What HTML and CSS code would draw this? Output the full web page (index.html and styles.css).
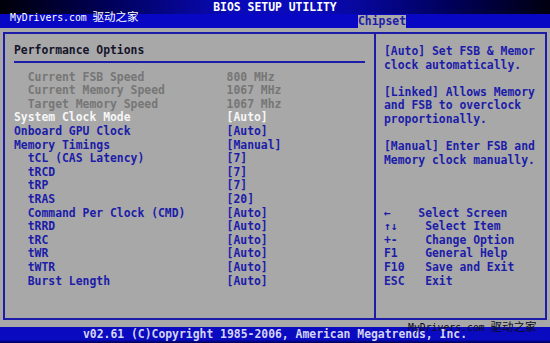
FILE: index.html
```html
<!DOCTYPE html>
<html lang="en">
<head>
  <meta charset="UTF-8">
  <meta name="viewport" content="width=device-width, initial-scale=1.0">
  <title>BIOS Setup Utility</title>
  <link rel="stylesheet" href="styles.css">
</head>
<body>
  <div class="screen">
    <header class="titlebar">BIOS SETUP UTILITY</header>
    <nav class="tabs">
      <span class="tab">Chipset</span>
    </nav>

    <main class="panels">
      <section class="options">
        <h1 class="heading">Performance Options</h1>
        <ul class="rows">
          <li class="row disabled"><span class="label sub">Current FSB Speed</span><span>800 MHz</span></li>
          <li class="row disabled"><span class="label sub">Current Memory Speed</span><span>1067 MHz</span></li>
          <li class="row disabled"><span class="label sub">Target Memory Speed</span><span>1067 Mhz</span></li>
          <li class="row selected"><span class="label">System Clock Mode</span><span>[Auto]</span></li>
          <li class="row"><span class="label">Onboard GPU Clock</span><span>[Auto]</span></li>
          <li class="row"><span class="label">Memory Timings</span><span>[Manual]</span></li>
          <li class="row"><span class="label sub">tCL (CAS Latency)</span><span>[7]</span></li>
          <li class="row"><span class="label sub">tRCD</span><span>[7]</span></li>
          <li class="row"><span class="label sub">tRP</span><span>[7]</span></li>
          <li class="row"><span class="label sub">tRAS</span><span>[20]</span></li>
          <li class="row"><span class="label sub">Command Per Clock (CMD)</span><span>[Auto]</span></li>
          <li class="row"><span class="label sub">tRRD</span><span>[Auto]</span></li>
          <li class="row"><span class="label sub">tRC</span><span>[Auto]</span></li>
          <li class="row"><span class="label sub">tWR</span><span>[Auto]</span></li>
          <li class="row"><span class="label sub">tWTR</span><span>[Auto]</span></li>
          <li class="row"><span class="label sub">Burst Length</span><span>[Auto]</span></li>
        </ul>
      </section>

      <aside class="help">
        <p>[Auto] Set FSB &amp; Memor<br>clock automatically.</p>
        <p>[Linked] Allows Memory<br>and FSB to overclock<br>proportionally.</p>
        <p>[Manual] Enter FSB and<br>Memory clock manually.</p>
        <div class="keys">←    Select Screen
↑↓    Select Item
+-    Change Option
F1    General Help
F10   Save and Exit
ESC   Exit</div>
      </aside>
    </main>

    <footer class="statusbar">v02.61 (C)Copyright 1985-2006, American Megatrends, Inc.</footer>

    <!-- watermarks over the picture -->
    <div class="mark mark-top">MyDrivers.com <span class="cjk">驱动之家</span></div>
    <div class="mark mark-bottom">MyDrivers.com <span class="cjk">驱动之家</span></div>
  </div>
</body>
</html>
```

FILE: styles.css
```css
:root {
  --bios-gray: #a8a8a8;
  --bios-blue: #1c1ca8;
  --bar-blue: #0808c4;
  --dim-text: #767676;
  --bright-text: #f6f6f6;
}

* {
  box-sizing: border-box;
}

body {
  margin: 0;
  background-color: var(--bios-gray);
  font-family: "DejaVu Sans Mono", "Liberation Mono", monospace;
  font-weight: bold;
  font-size: 11.4px;
  line-height: 13.6px;
}

.screen {
  position: relative;
  width: 550px;
  height: 343px;
  display: flex;
  flex-direction: column;
  overflow: hidden;
}

.titlebar {
  height: 14px;
  line-height: 14px;
  text-align: center;
  color: #ffffff;
  background: linear-gradient(to right, #000008 0%, #00005a 20%, #0a0ab8 42%, #0a0ab8 58%, #00005a 82%, #000010 100%);
}

.tabs {
  height: 14px;
  display: flex;
  align-items: flex-end;
  background-color: var(--bar-blue);
}

.tab {
  margin-left: 358px;
  height: 13px;
  line-height: 13px;
  background-color: var(--bios-gray);
  color: var(--bios-blue);
}

.panels {
  flex: 1;
  display: flex;
  padding: 4px 3px 7px 3px;
}

.options {
  width: 371px;
  border: 2px solid var(--bios-blue);
  border-right: none;
  padding: 10px 9px 0 9px;
}

.heading {
  margin: 0;
  font-size: inherit;
  line-height: 13.6px;
  color: #14142a;
  padding-bottom: 3px;
  border-bottom: 2px solid var(--bios-blue);
}

.rows {
  list-style: none;
  margin: 8px 0 0 0;
  padding: 0;
}

.row {
  display: grid;
  grid-template-columns: 31ch 1fr;
  color: var(--bios-blue);
  white-space: pre;
}

.row .sub {
  padding-left: 2ch;
}

.row.disabled {
  color: var(--dim-text);
}

.row.selected {
  color: var(--bright-text);
}

.help {
  flex: 1;
  border: 2px solid var(--bios-blue);
  padding: 11px 0 0 8px;
  color: var(--bios-blue);
}

.help p {
  margin: 0 0 13.6px 0;
  white-space: nowrap;
}

.keys {
  margin-top: 39.2px;
  white-space: pre;
}

.statusbar {
  height: 16px;
  line-height: 15px;
  text-align: center;
  color: #d4d4f4;
  background: linear-gradient(to bottom, #0a0ac0 0%, #0a0ac0 80%, #000050 100%);
}

.mark {
  position: absolute;
  font-family: "DejaVu Sans Mono", monospace;
  font-weight: normal;
  font-size: 9.8px;
  line-height: 12px;
  white-space: nowrap;
}

.mark .cjk {
  font-family: "Noto Sans CJK SC", sans-serif;
  font-size: 11.5px;
}

.mark-top {
  left: 10px;
  top: 10px;
  color: #ffffff;
}

.mark-bottom {
  left: 408px;
  top: 320px;
  color: #0a0a20;
}
```
